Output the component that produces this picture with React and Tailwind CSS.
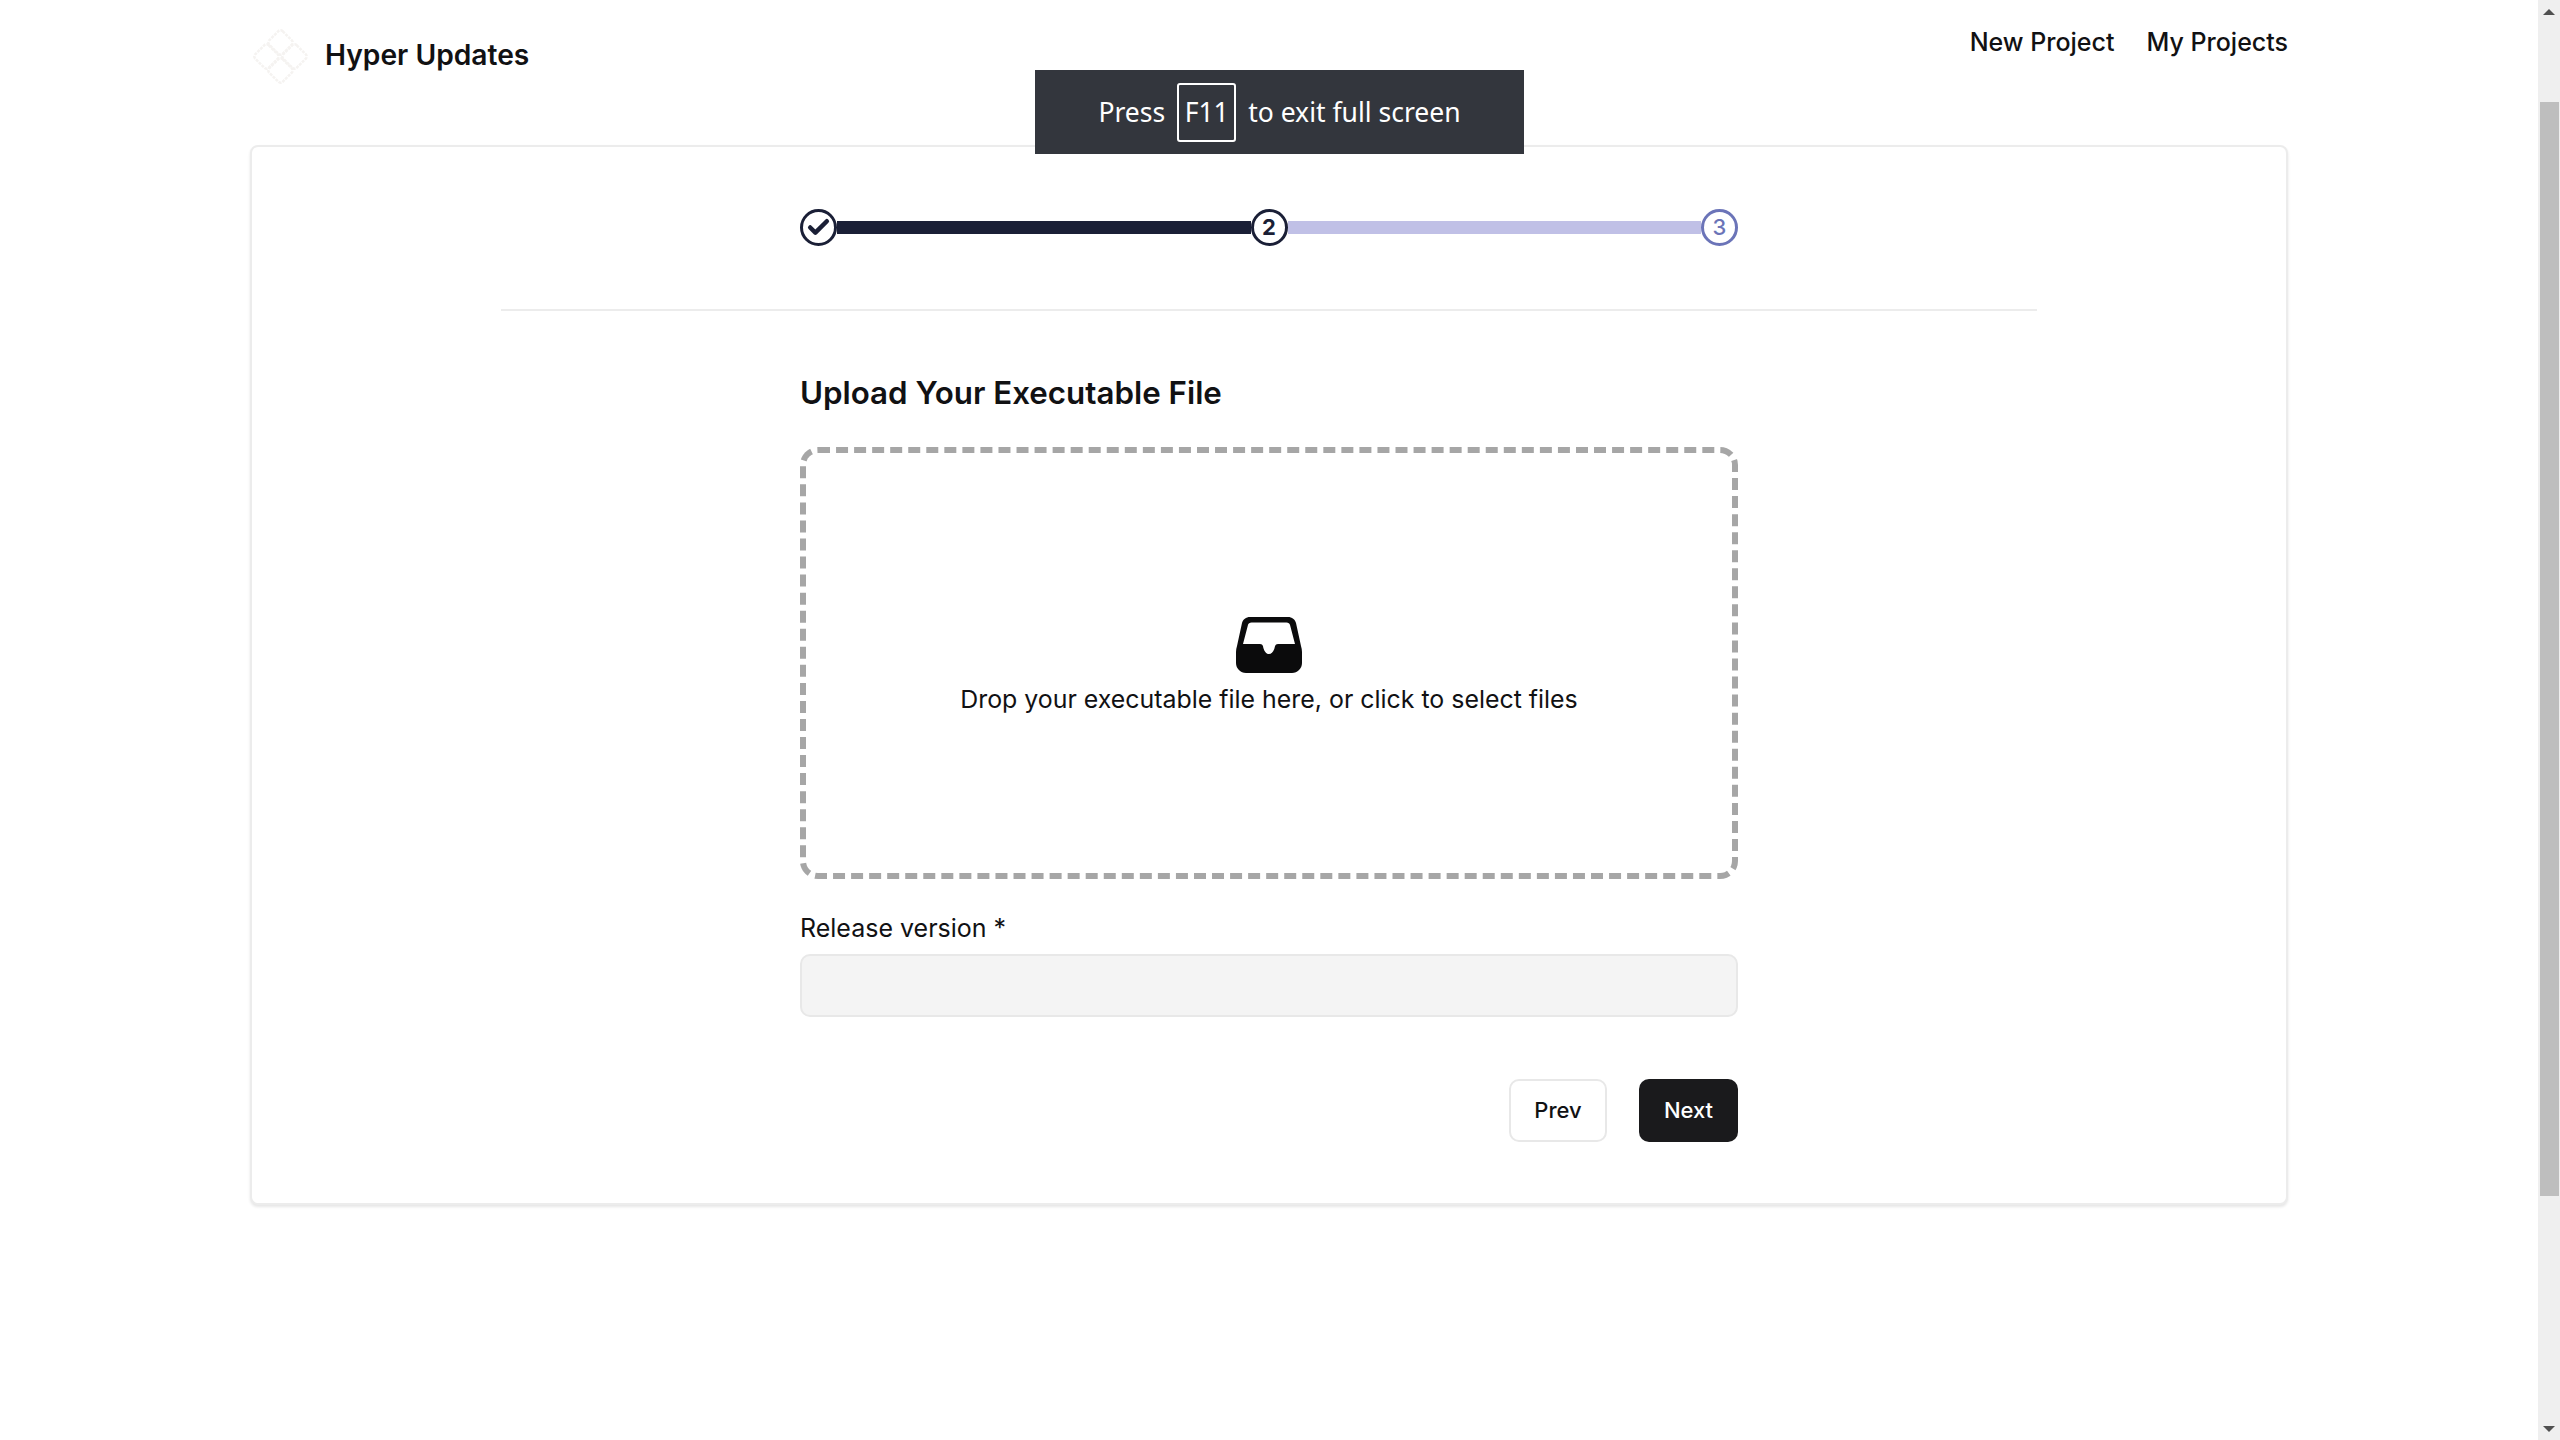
import { Check } from 'lucide-react';

const Logo = () => (
  <svg width="58" height="58" viewBox="0 0 58 58" fill="none" stroke="#f5f3f1" strokeWidth="2.5" strokeDasharray="3 1">
    <rect x="19" y="5" width="19" height="19" rx="3" transform="rotate(45 28.5 14.5)" />
    <rect x="5" y="19" width="19" height="19" rx="3" transform="rotate(45 14.5 28.5)" />
    <rect x="33" y="19" width="19" height="19" rx="3" transform="rotate(45 42.5 28.5)" />
    <rect x="19" y="33" width="19" height="19" rx="3" transform="rotate(45 28.5 42.5)" />
  </svg>
);

const InboxIcon = () => (
  <svg width="66" height="56" viewBox="0 0 66 56" fill="#0b0b0c">
    <path
      fillRule="evenodd"
      d="M14 0h38c4 0 7 2.400 8 6l5 23c.6 2 1 4 1 6v11c0 5.500-4.500 10-10 10H10C4.500 56 0 51.500 0 46V35c0-2 .4-4 1-6L6 6c1-3.600 4-6 8-6zm1.500 5.500c-1.800 0-3.200 1-3.600 2.800L7 27h17c1.500 0 2.500.8 3 2.200.8 4.500 3 7.800 6 7.800s5.200-3.300 6-7.800c.5-1.400 1.500-2.200 3-2.200h17L54.100 8.300c-.4-1.800-1.800-2.800-3.600-2.800z"
    />
  </svg>
);

export default function App() {
  return (
    <div className="relative flex h-screen overflow-hidden bg-white text-[#111113] font-['Inter',sans-serif]">
      <div className="flex-1 min-w-0">
        <div className="w-[2038px] ml-[250px]">
          <header className="h-[145px] flex justify-between">
            <div className="flex items-center gap-[15px] h-[110px] pl-[2px]">
              <div className="mt-[4px]">
                <Logo />
              </div>
              <span className="text-[28.2px] font-semibold">Hyper Updates</span>
            </div>
            <nav className="flex gap-[32px] pt-[24px] text-[25px] font-medium leading-[36px]">
              <span>New Project</span>
              <span>My Projects</span>
            </nav>
          </header>

          <main className="h-[1060px] bg-white border-2 border-[#ececec] rounded-[8px] shadow-[0_2px_3px_rgba(0,0,0,0.1)] pt-[62px]">
            <div className="w-[938px] ml-[548px] flex items-center">
              <div className="w-[37px] h-[37px] shrink-0 rounded-full border-[3px] border-[#1a1f36] flex items-center justify-center">
                <Check size={25} strokeWidth={4.3} className="text-[#1a1f36]" />
              </div>
              <div className="flex-1 h-[13px] bg-[#1a1f36]" />
              <div className="w-[37px] h-[37px] shrink-0 rounded-full border-[3px] border-[#1a1f36] flex items-center justify-center text-[22px] font-bold text-[#1a1f36]">
                2
              </div>
              <div className="flex-1 h-[13px] bg-[#c0c0e6]" />
              <div className="w-[37px] h-[37px] shrink-0 rounded-full border-[3px] border-[#6b74b8] flex items-center justify-center text-[22px] font-medium text-[#6b74b8]">
                3
              </div>
            </div>

            <div className="w-[1536px] ml-[249px] mt-[63px] border-t-2 border-[#ececec]" />

            <div className="w-[938px] ml-[548px] mt-[60px]">
              <h2 className="text-[31.3px] leading-[44px] font-semibold">Upload Your Executable File</h2>
              <div className="mt-[32px] h-[432px] border-[6px] border-dashed border-[#a6a6a6] rounded-[18px] flex flex-col items-center justify-center pt-[7px]">
                <InboxIcon />
                <p className="mt-[8px] text-[24.9px] leading-[36px]">Drop your executable file here, or click to select files</p>
              </div>
              <label className="block mt-[31px] text-[25px] leading-[36px]">Release version *</label>
              <div className="mt-[8px] h-[63px] bg-[#f4f4f4] border-2 border-[#e8e8e8] rounded-[10px]" />
              <div className="mt-[62px] flex justify-end gap-[32px]">
                <button className="w-[98px] h-[63px] bg-white border-2 border-[#e8e8e8] rounded-[10px] text-[22px] font-medium">Prev</button>
                <button className="w-[99px] h-[63px] bg-[#1a1a1c] rounded-[10px] text-[22px] font-medium text-white">Next</button>
              </div>
            </div>
          </main>
        </div>
      </div>

      {/* browser scrollbar */}
      <div className="w-[22px] shrink-0 bg-[#efefef] flex flex-col items-center">
        <div className="h-[102px] w-full flex justify-center pt-[9px]">
          <div className="w-0 h-0 border-x-[6px] border-x-transparent border-b-[6px] border-b-[#505050]" />
        </div>
        <div className="ml-[1px] w-[19px] h-[1094px] bg-[#bebebe]" />
        <div className="flex-1 w-full flex justify-center items-end pb-[8px]">
          <div className="w-0 h-0 border-x-[6px] border-x-transparent border-t-[6px] border-t-[#505050]" />
        </div>
      </div>

      {/* fullscreen notice */}
      <div className="absolute left-[1035px] top-[70px] w-[489px] h-[84px] bg-[#33363d] text-white flex items-center justify-center gap-[12px] text-[26.5px] font-['Noto_Sans',sans-serif]">
        <span className="pt-[2px]">Press</span>
        <span className="w-[59px] h-[59px] pt-[2px] border-2 border-white rounded-[3px] flex items-center justify-center">F11</span>
        <span className="pt-[2px]">to exit full screen</span>
      </div>
    </div>
  );
}
